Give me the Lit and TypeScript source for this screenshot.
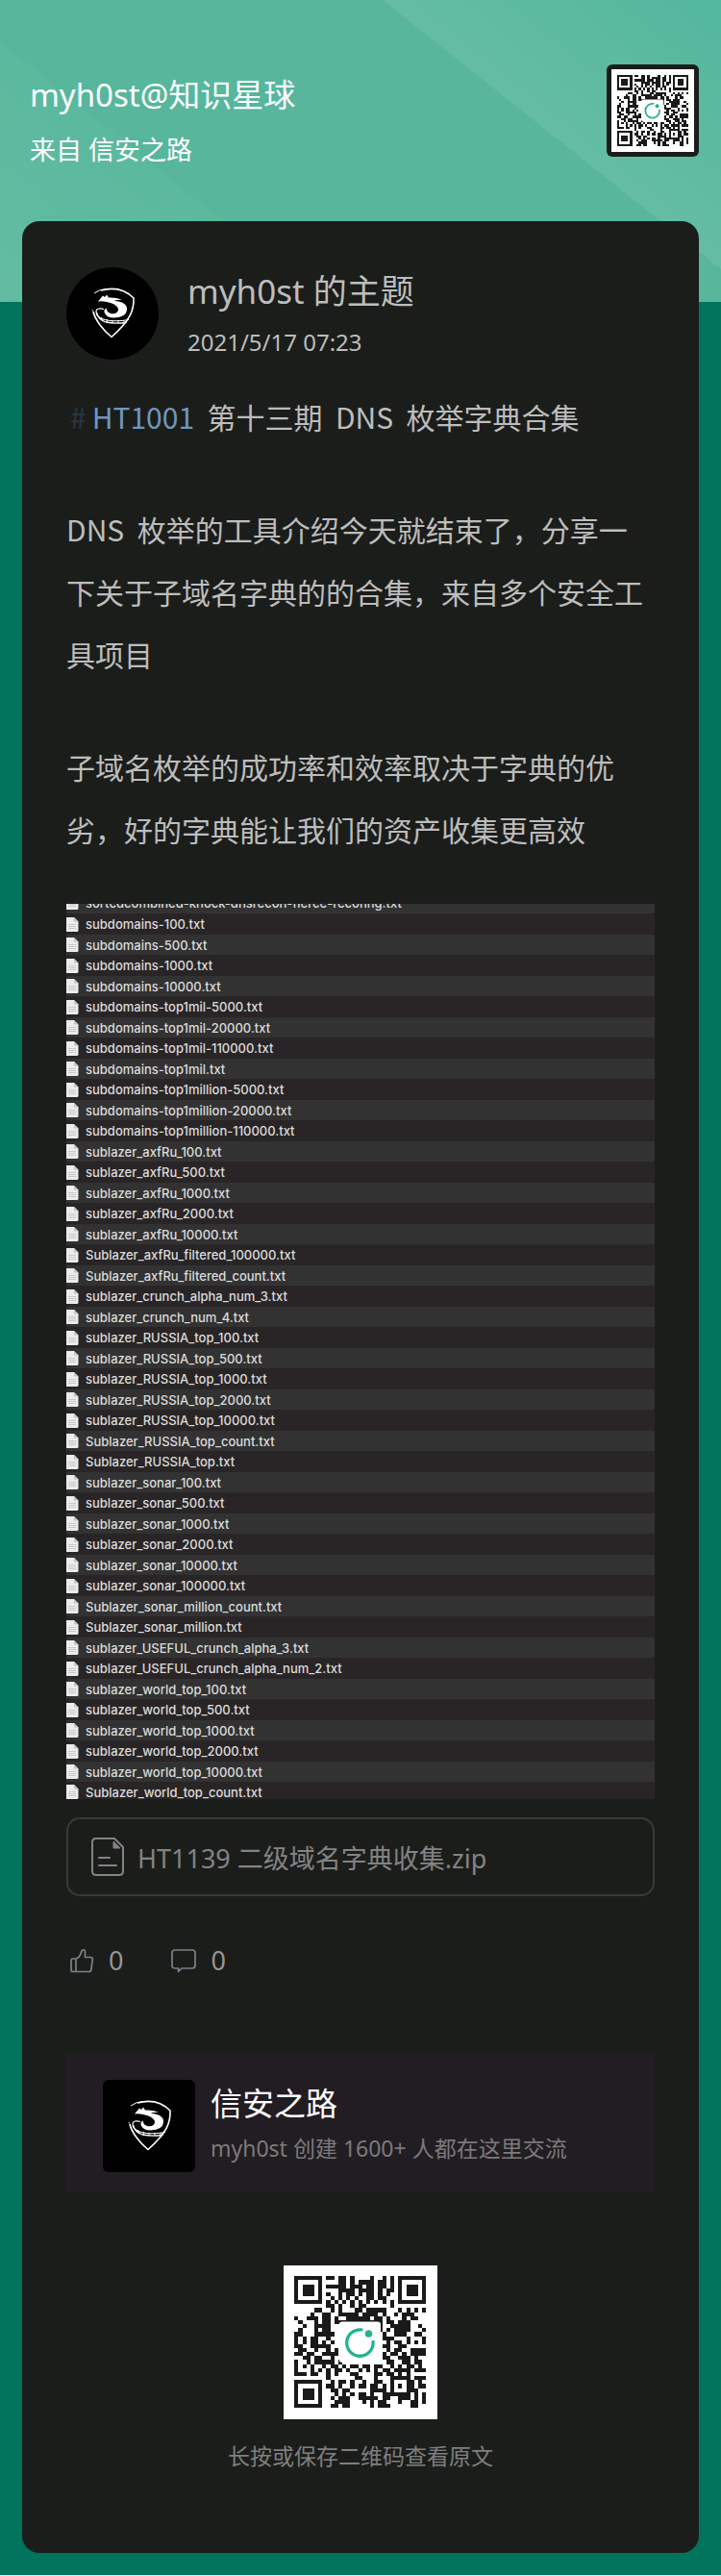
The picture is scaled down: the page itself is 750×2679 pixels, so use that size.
import { LitElement, html, css, svg } from "lit";
import { customElement, property } from "lit/decorators.js";

const FILES = [
  "subdomains-100.txt", "subdomains-500.txt", "subdomains-1000.txt", "subdomains-10000.txt",
  "subdomains-top1mil-5000.txt", "subdomains-top1mil-20000.txt", "subdomains-top1mil-110000.txt",
  "subdomains-top1mil.txt", "subdomains-top1million-5000.txt", "subdomains-top1million-20000.txt",
  "subdomains-top1million-110000.txt", "sublazer_axfRu_100.txt", "sublazer_axfRu_500.txt",
  "sublazer_axfRu_1000.txt", "sublazer_axfRu_2000.txt", "sublazer_axfRu_10000.txt",
  "Sublazer_axfRu_filtered_100000.txt", "Sublazer_axfRu_filtered_count.txt",
  "sublazer_crunch_alpha_num_3.txt", "sublazer_crunch_num_4.txt", "sublazer_RUSSIA_top_100.txt",
  "sublazer_RUSSIA_top_500.txt", "sublazer_RUSSIA_top_1000.txt", "sublazer_RUSSIA_top_2000.txt",
  "sublazer_RUSSIA_top_10000.txt", "Sublazer_RUSSIA_top_count.txt", "Sublazer_RUSSIA_top.txt",
  "sublazer_sonar_100.txt", "sublazer_sonar_500.txt", "sublazer_sonar_1000.txt",
  "sublazer_sonar_2000.txt", "sublazer_sonar_10000.txt", "sublazer_sonar_100000.txt",
  "Sublazer_sonar_million_count.txt", "Sublazer_sonar_million.txt",
  "sublazer_USEFUL_crunch_alpha_3.txt", "sublazer_USEFUL_crunch_alpha_num_2.txt",
  "sublazer_world_top_100.txt", "sublazer_world_top_500.txt", "sublazer_world_top_1000.txt",
  "sublazer_world_top_2000.txt", "sublazer_world_top_10000.txt", "Sublazer_world_top_count.txt",
];

/* Module rows of the code; "#" is a dark module. */
const MODULES = [
  "#######.##.##.#....#..#.#.#######",
  "#.....#....##.#.####.##.#.#.....#",
  "#.###.#.#####.###.##.##.#.#.###.#",
  "#.###.#....####.####.#.##.#.###.#",
  "#.###.#.#..#.##.#.##.#.#..#.###.#",
  "#.....#..#.#.#.#..##.##...#.....#",
  "#######.#.#.#.#.#.#.#.#.#.#######",
  "........##.#..#.##......#........",
  ".....##..#.#...##.#####...#.#.#.#",
  "....#..##..#####.####.#..#.###...",
  "#..###.##.#..######.##.#...#.##..",
  ".#...#.##.############.##.###....",
  "..#..####............#..#####..#.",
  ".#...#.##............#.#.####...#",
  "##...#####............#..###..##.",
  "#.#.##..#.............###...#...#",
  "#.#.##.#.#.............#.##.#.#.#",
  "##..#####.............##..##.....",
  ".##..#..#.#............#.##..####",
  "##.##..####...........#.##.#.####",
  "..##.##..#............##..###.#..",
  "#..#.#####.#...........##..##.##.",
  "#.#.#..#.##.#.##.##.##..#.#.##.#.",
  "#...#.#.#.##.#..#.#.#.##.####.###",
  "###.##..#.#...##....##.##.#.#....",
  "........#......##...#...#####.###",
  "#######..#.##.#..#..##..#...##.#.",
  "#.....#.##.#..#.##.##.#.#.#.##.##",
  "#.###.#..##.##.....####.#...###..",
  "#.###.#...#.#.#.##.#..#######.#.#",
  "#.###.#..#.###..#####.##..###.#.#",
  "#.....#...####...#.#.##...#..##.#",
  "#######..##.##.....#.###.....##..",
];

const QR_PATH = MODULES.map((row, y) =>
  row.split(/(?<=\.)(?=#)|(?<=#)(?=\.)/).reduce(
    (acc, run) => ({
      x: acc.x + run.length,
      d: run[0] === "#" ? `${acc.d}M${acc.x} ${y}h${run.length}v1h-${run.length}z` : acc.d,
    }),
    { x: 0, d: "" },
  ).d,
).join("");

@customElement("qr-code")
class QrCode extends LitElement {
  static styles = css`
    :host { display: block; background: #fff; }
    svg { display: block; width: 100%; }
  `;
  render() {
    return html`<svg viewBox="-2.7 -2.7 38.5 38.5" role="img" aria-label="二维码">
      <path d=${QR_PATH} fill="#1a1a1a" shape-rendering="crispEdges" />
      <rect x="11.2" y="11.4" width="10.4" height="10.2" rx=".8" fill="#fff" />
      <path d="M16.8 13.4A3.3 3.3 0 1 0 19.7 16.4" fill="none" stroke="#25b392" stroke-width=".8" stroke-linecap="round" />
      <circle cx="18.6" cy="14.4" r=".9" fill="#25b392" />
    </svg>`;
  }
}

@customElement("group-logo")
class GroupLogo extends LitElement {
  @property({ type: Boolean, reflect: true }) round = false;
  static styles = css`
    :host { display: block; flex: none; width: 96px; background: #000; border-radius: 6px; overflow: hidden; }
    :host([round]) { border-radius: 50%; }
    svg { display: block; width: 100%; }
  `;
  render() {
    return html`<svg viewBox="0 0 96 96" fill="none" stroke="#fff" aria-hidden="true">
      <path d="M29 27Q34 23 42 22.500" stroke-width="1" />
      <path d="M36 24C47 21 60 22 70 32C70.500 44 67 55 47 72.500C39 66 30 55 28 46" stroke-width="1.600" />
      <path d="M27 44L31 55" stroke-width="1" stroke-dasharray="1.500 1.500" />
      <path fill="#fff" stroke="none" d="M33 35.500L38 29.500L40 31L42 28.500L44 31.500Q50 31 58 33.500Q52 33.500 50 35Q64 36 63 44.500Q62 52 50 52.500Q41 52.500 39.500 46.500Q39 43.500 42 42.500Q41.500 46.500 46 48Q53 49 54 44.500Q54.500 40 46 37Q38 34.500 33 35.500Z" />
      <path d="M39 43.500Q32 41.500 31 45.500Q30.500 52 40 54.500Q50 57 65 54.500" stroke-width="1.200" />
      <path d="M31.500 47Q33 54 41 57Q50 59 62.500 57.500" stroke-width="1.300" />
      <path d="M36 54L37 52M42 57L42.500 54M48 58V55M54 58V55M60 58V55" stroke-width="1" />
    </svg>`;
  }
}

const docIcon = svg`
  <path d="M0 0H8L12.500 4.500V13.500Q12.500 15 11 15H0Z" fill="#ececec" />
  <path d="M8 0L12.500 4.500H8Z" fill="#c4c4c4" />
  <path d="M2 7.500H10M2 9.500H10M2 11.500H10" stroke="#c9c9c9" />`;

@customElement("file-listing")
class FileListing extends LitElement {
  static styles = css`
    :host { display: block; overflow: hidden; font: 500 13px/22px Inter, sans-serif; color: #dcdcdc; }
    ul { margin: 0; padding: 0; list-style: none; }
    .row { display: flex; align-items: center; gap: 7px; height: 22px; background: #292526; overflow: hidden; }
    .row:nth-child(odd) { height: 21px; background: #323232; }
    .row.first { height: 10px; align-items: flex-end; }
    .row.first .icon { margin-bottom: 4px; }
    .row:last-child { height: 18px; align-items: flex-start; }
    .row:last-child .icon { margin-top: 3px; }
    .icon { flex: none; width: 13px; height: 15px; }
    .name { white-space: nowrap; }
  `;
  render() {
    return html`<ul>
      <li class="row first">
        <svg class="icon" viewBox="0 0 13 15">${docIcon}</svg>
        <span class="name">sortedcombined-knock-dnsrecon-fierce-reconng.txt</span>
      </li>
      ${FILES.map((name) => html`<li class="row">
        <svg class="icon" viewBox="0 0 13 15">${docIcon}</svg>
        <span class="name">${name}</span>
      </li>`)}
    </ul>`;
  }
}

@customElement("app-root")
class AppRoot extends LitElement {
  static styles = css`
    :host {
      display: block;
      position: relative;
      background: #00745c;
      font-family: "Noto Sans", "Noto Sans CJK SC", sans-serif;
      color: #bdbdbd;
    }
    h1, h2, p { margin: 0; font-weight: 400; }
    a { color: inherit; text-decoration: none; }
    .backdrop { position: absolute; top: 0; left: 0; width: 100%; height: 314px; }
    .page { position: relative; padding: 67px 23px 23px; }
    .head { display: flex; justify-content: space-between; align-items: flex-start; padding-left: 8px; color: #fff; }
    .who { display: flex; flex-direction: column; gap: 12px; padding-top: 8px; }
    .who h1 { font-size: 33px; line-height: 48px; }
    .who p { font-size: 27px; line-height: 42px; }
    .badge { width: 86px; padding: 5px; background: #1b1d1b; border-radius: 6px; }
    .card { margin-top: 53px; padding: 48px 46px 85px; background: #1b1d1b; border-radius: 18px; }
    .author { display: flex; gap: 30px; }
    .author h2 { font-size: 35px; line-height: 50px; }
    .author p { padding-top: 10px; font-size: 24px; line-height: 36px; }
    .post { display: grid; gap: 52px; margin: 27px 0 45px; font: 30px/65px "Noto Sans CJK SC", sans-serif; }
    .post p { white-space: pre-wrap; }
    .tag { color: #7097bb; }
    .hash { margin: 0 6px 0 4px; color: #283740; }
    .attach {
      display: flex; align-items: center; gap: 14px; margin-top: 19px; height: 78px; padding: 0 24px;
      border: 2px solid #383a38; border-radius: 14px; font-size: 27px; color: #838383;
    }
    .attach svg { width: 34px; height: 40px; }
    .stats { display: flex; gap: 44px; margin-top: 48px; }
    .stats button {
      display: flex; align-items: center; gap: 15px; padding: 0 3px; border: 0; background: none;
      font: 27px/38px "Noto Sans", sans-serif; color: #969694;
    }
    .stats svg { width: 26px; height: 26px; }
    .group { display: flex; gap: 16px; margin-top: 77px; padding: 28px 38px 20px; background: #221d22; }
    .group h2 { font-size: 33px; line-height: 50px; color: #fff; }
    .group p { padding-top: 3px; font-size: 23px; line-height: 36px; color: #7b7b7b; }
    .scan { display: flex; flex-direction: column; align-items: center; gap: 22px; margin-top: 77px; font-size: 23px; line-height: 32px; color: #7f7f7f; }
    .scan qr-code { width: 160px; }
  `;
  render() {
    return html`
      <svg class="backdrop" viewBox="0 0 750 314" preserveAspectRatio="none" aria-hidden="true">
        <defs>
          <linearGradient id="band" x1="0" y1="1" x2="1" y2="0">
            <stop offset=".45" stop-color="#66bda4" /><stop offset="1" stop-color="#52b79d" />
          </linearGradient>
          <linearGradient id="edge" x1="0" y1="1" x2="1" y2="0">
            <stop offset="0" stop-color="#63bca2" /><stop offset=".6" stop-color="#59b89d" />
          </linearGradient>
        </defs>
        <path d="M0 0H750V314H0Z" fill="#57b69c" />
        <path d="M398 0H750V280Z" fill="url(#band)" />
        <path d="M0 43L336 314H0Z" fill="url(#edge)" />
      </svg>
      <div class="page">
        <header class="head">
          <div class="who"><h1>myh0st@知识星球</h1><p>来自 信安之路</p></div>
          <div class="badge"><qr-code></qr-code></div>
        </header>
        <main class="card">
          <div class="author">
            <group-logo round></group-logo>
            <div><h2>myh0st 的主题</h2><p>2021/5/17 07:23</p></div>
          </div>
          <div class="post">
            <p><a class="tag" href="#HT1001"><span class="hash">#</span>HT1001</a>  第十三期  DNS  枚举字典合集</p>
            <p>DNS  枚举的工具介绍今天就结束了，分享一下关于子域名字典的的合集，来自多个安全工具项目</p>
            <p>子域名枚举的成功率和效率取决于字典的优劣，好的字典能让我们的资产收集更高效</p>
          </div>
          <file-listing></file-listing>
          <a class="attach" href="#attachment">
            <svg viewBox="0 0 34 40" fill="none" stroke="#838383" stroke-width="2" aria-hidden="true">
              <path d="M5 1H24L33 10V35Q33 39 29 39H5Q1 39 1 35V5Q1 1 5 1Z" />
              <path d="M23 4V11H30Z" fill="#838383" stroke-width="1" />
              <path d="M8 21H19M8 29H26" stroke-linecap="round" />
            </svg>
            <span>HT1139 二级域名字典收集.zip</span>
          </a>
          <div class="stats">
            <button type="button" aria-label="点赞 0">
              <svg viewBox="0 0 26 26" fill="none" stroke="#7c8088" stroke-width="1.700" stroke-linejoin="round">
                <path d="M7 11H4Q2 11 2 13V22.500Q2 24.500 4 24.500H20.500Q22.500 24.500 22.800 22.500L24.300 12Q24.500 9.500 22 9.500H16.500V4Q16.500 1.800 14.500 1.800Q13 1.800 12.500 4Q11.500 9.500 7 11V24.500" />
              </svg>0
            </button>
            <button type="button" aria-label="评论 0">
              <svg viewBox="0 0 26 26" fill="none" stroke="#7c8088" stroke-width="1.700" stroke-linejoin="round">
                <path d="M4 2H22Q25 2 25 5V18Q25 21 22 21H11L7.500 24.500V21H4Q1 21 1 18V5Q1 2 4 2Z" />
              </svg>0
            </button>
          </div>
          <section class="group">
            <group-logo></group-logo>
            <div><h2>信安之路</h2><p>myh0st 创建 1600+ 人都在这里交流</p></div>
          </section>
          <div class="scan"><qr-code></qr-code><p>长按或保存二维码查看原文</p></div>
        </main>
      </div>
    `;
  }
}
